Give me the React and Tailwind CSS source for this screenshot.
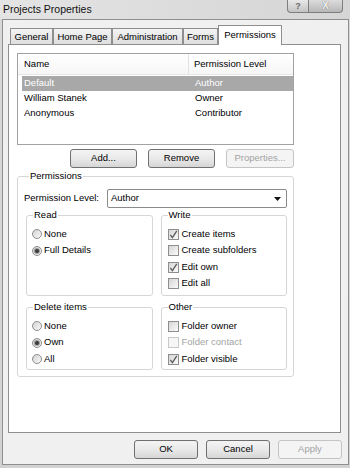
import React from "react";

function Check({ checked, disabled, label }) {
  return (
    <div className="flex items-center h-[16.5px]">
      <span
        className={
          disabled
            ? "w-[11px] h-[11px] border border-[#c9c9c9] bg-[#f6f6f6] flex items-center justify-center"
            : "w-[11px] h-[11px] border border-[#8e8e8e] bg-gradient-to-br from-[#d6d6d6] to-[#fbfbfb] flex items-center justify-center"
        }
      >
        {checked && (
          <svg width="9" height="9" viewBox="0 0 9 9">
            <path d="M1.3 4.8 L3.4 7.6 L7.8 0.8" stroke="#5a5a5a" strokeWidth="1.3" fill="none" />
          </svg>
        )}
      </span>
      <span className={disabled ? "ml-[3px] text-[#a3a3a3]" : "ml-[3px] text-black"}>{label}</span>
    </div>
  );
}

function Radio({ checked, label }) {
  return (
    <div className="flex items-center h-[16.5px]">
      <span className="w-[10px] h-[10px] rounded-full border border-[#8e8e8e] bg-gradient-to-br from-[#d2d2d2] to-[#fafafa] flex items-center justify-center">
        {checked && <span className="w-[4px] h-[4px] rounded-full bg-[#3c3c3c] ring-1 ring-[#9a9a9a]" />}
      </span>
      <span className="ml-[2px]">{label}</span>
    </div>
  );
}

function Btn({ children, disabled, w }) {
  return (
    <div
      className={
        disabled
          ? `${w} h-[19px] rounded-[3px] border border-[#c4c4c4] bg-[#f4f4f4] text-[#a3a3a3] flex items-center justify-center`
          : `${w} h-[19px] rounded-[3px] border border-[#707070] bg-gradient-to-b from-[#f4f4f4] via-[#e9e9e9] to-[#d6d6d6] text-black flex items-center justify-center`
      }
    >
      {children}
    </div>
  );
}

function Group({ title, h, children }) {
  return (
    <fieldset className={`${h} border border-[#d6d6d6] rounded-[3px] pl-[5px]`}>
      <legend className="ml-[1px] px-[1px] leading-[12px]">{title}</legend>
      <div className="pt-[4.75px]">{children}</div>
    </fieldset>
  );
}

export default function App() {
  const tabs = [
    { t: "General", w: "w-[43px]" },
    { t: "Home Page", w: "w-[59px]" },
    { t: "Administration", w: "w-[71px]" },
    { t: "Forms", w: "w-[35px]" },
  ];
  const rows = [
    ["Default", "Author", true],
    ["William Stanek", "Owner", false],
    ["Anonymous", "Contributor", false],
  ];
  return (
    <div className="w-[350px] h-[468px] bg-gradient-to-b from-[#d9d9d9] to-[#d2d2d2] font-['Liberation_Sans',Arial,sans-serif] text-[9.5px] text-black overflow-hidden">
      {/* title bar */}
      <div className="h-[19px] flex justify-between bg-gradient-to-r from-[#e4e4e4] via-[#dcdcdc] to-[#d6d6d6]">
        <div className="pl-[3px] pt-[2px] text-[10.5px] leading-[14px] text-[#111]">Projects Properties</div>
        <div className="flex pr-[7px] h-[13px]">
          <div className="w-[22px] h-[13px] border border-t-0 border-[#7e7e7e] rounded-bl-[4px] bg-gradient-to-b from-[#e8e8e8] to-[#c4c4c4] flex items-center justify-center text-[9px] font-bold text-[#6c6c6c] leading-none">
            ?
          </div>
          <div className="w-[34px] h-[13px] border border-t-0 border-l-0 border-[#7e7e7e] rounded-br-[4px] bg-gradient-to-b from-[#dcdcdc] to-[#b8b8b8] flex items-center justify-center text-[10px] font-bold text-[#f2f2f2] leading-none [text-shadow:0_0_1px_#555]">
            X
          </div>
        </div>
      </div>

      {/* client area */}
      <div className="ml-[2px] w-[347px] h-[446px] border border-[#8f8f8f] bg-[#f0f0f0] flex flex-col">
        <div className="pt-[5px]">
          {/* tabs */}
          <div className="ml-[7px] h-[19px] flex items-end">
            {tabs.map((tb) => (
              <div
                key={tb.t}
                className={`${tb.w} h-[16px] border border-b-0 border-[#8e8e8e] bg-gradient-to-b from-[#f4f4f4] to-[#dedede] flex items-center justify-center leading-none`}
              >
                {tb.t}
              </div>
            ))}
            <div className="relative z-10 w-[64px] h-[20px] -mb-px border border-b-0 border-[#8e8e8e] bg-white flex justify-center pt-[4px] leading-none">
              Permissions
            </div>
          </div>

          {/* panel */}
          <div className="ml-[5px] w-[333px] h-[389px] border border-[#8e8e8e] bg-white pl-[8px] pt-[8px]">
            {/* list view */}
            <div className="w-[277px] h-[92px] border border-[#a2a2a2] bg-white">
              <div className="h-[21px] flex border-b border-[#e6e6e6] bg-gradient-to-b from-white to-[#f6f6f6]">
                <div className="w-[171px] border-r border-[#e2e2e2] pl-[6px] flex items-center">Name</div>
                <div className="pl-[5px] flex items-center">Permission Level</div>
              </div>
              <div className="pt-[1px] ml-[4px]">
                {rows.map(([n, p, sel]) => (
                  <div
                    key={n}
                    className={sel ? "h-[15px] flex items-center bg-[#a8a8a8] text-white" : "h-[15px] flex items-center"}
                  >
                    <div className="w-[173px] pl-[2px]">{n}</div>
                    <div>{p}</div>
                  </div>
                ))}
              </div>
            </div>

            {/* list buttons */}
            <div className="w-[277px] mt-[4px] flex justify-end gap-[11px]">
              <Btn w="w-[67px]">Add...</Btn>
              <Btn w="w-[67px]">Remove</Btn>
              <Btn w="w-[68px]" disabled>
                Properties...
              </Btn>
            </div>

            {/* permissions group */}
            <fieldset className="mt-[2px] w-[277px] h-[207px] border border-[#d6d6d6] rounded-[3px] px-[6px]">
              <legend className="ml-[5px] px-[1px] leading-[12px]">Permissions</legend>
              <div className="pt-[7px] flex items-center h-[26px]">
                <div className="w-[83px]">Permission Level:</div>
                <div className="flex-1 h-[19px] border border-[#8a8a8a] rounded-[2px] bg-white flex items-center justify-between pl-[3px] pr-[5px]">
                  <span>Author</span>
                  <svg width="7" height="4" viewBox="0 0 7 4">
                    <path d="M0 0 H7 L3.5 4 Z" fill="#111" />
                  </svg>
                </div>
              </div>
              <div className="ml-[2px] mt-[1px] grid grid-cols-2 gap-x-[8px] gap-y-[5px]">
                <Group title="Read" h="h-[87px]">
                  <Radio label="None" />
                  <Radio label="Full Details" checked />
                </Group>
                <Group title="Write" h="h-[87px]">
                  <div className="pl-[1px]">
                    <Check label="Create items" checked />
                    <Check label="Create subfolders" />
                    <Check label="Edit own" checked />
                    <Check label="Edit all" />
                  </div>
                </Group>
                <Group title="Delete items" h="h-[69px]">
                  <Radio label="None" />
                  <Radio label="Own" checked />
                  <Radio label="All" />
                </Group>
                <Group title="Other" h="h-[69px]">
                  <div className="pl-[1px]">
                    <Check label="Folder owner" />
                    <Check label="Folder contact" disabled />
                    <Check label="Folder visible" checked />
                  </div>
                </Group>
              </div>
            </fieldset>
          </div>

          {/* dialog buttons */}
          <div className="mt-[7px] pr-[6px] flex justify-end gap-[8px]">
            <Btn w="w-[64px]">OK</Btn>
            <Btn w="w-[64px]">Cancel</Btn>
            <Btn w="w-[64px]" disabled>
              Apply
            </Btn>
          </div>
        </div>
      </div>
    </div>
  );
}
